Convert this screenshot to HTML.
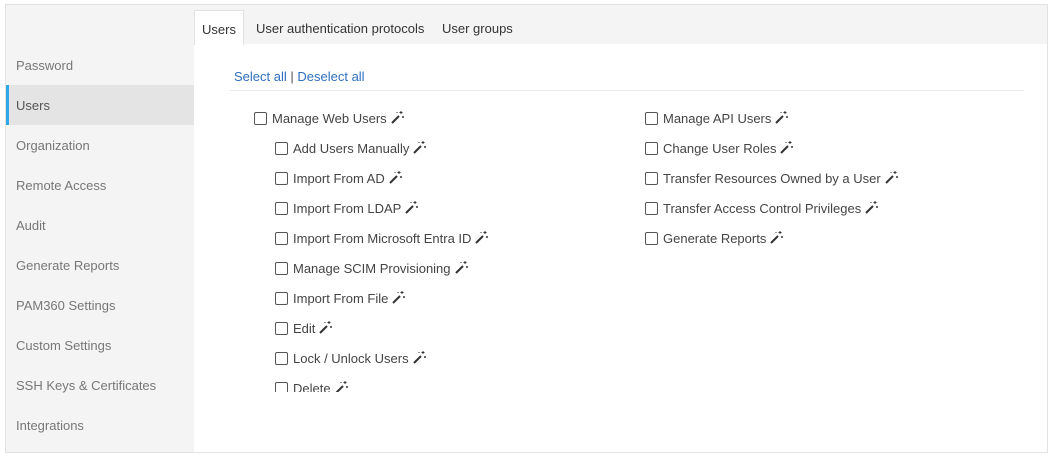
<!DOCTYPE html>
<html><head><style>
body{margin:0;width:1053px;height:457px;background:#fff;font-family:"Liberation Sans",sans-serif;font-size:13px;color:#333;position:relative;overflow:hidden}
.frame{position:absolute;left:5px;top:4px;width:1043px;height:449px;border:1px solid #e2e2e2;background:#f4f4f4;box-sizing:border-box}
.side div{position:absolute;left:6px;width:188px;height:40px;line-height:42px;padding-left:10px;box-sizing:border-box;color:#777}
.side .act{background:#e4e4e4;border-left:3px solid #2ea8e6;padding-left:7px;color:#555}
.content{position:absolute;left:194px;top:44px;width:853px;height:408px;background:#fff}
.tab{position:absolute;top:10px;height:34px;line-height:37px;color:#333}
.tab.a{background:#fff;border:1px solid #e2e2e2;border-bottom:none;left:194px;width:50px;text-align:center;box-sizing:border-box;height:35px}
.links{position:absolute;left:234px;top:69px;color:#2f6fbd}
.links span{color:#555}
.hr{position:absolute;left:229px;top:90px;width:795px;height:1px;background:#ebebeb}
.clip{position:absolute;left:240px;top:100px;width:800px;height:292px;overflow:hidden}
.row{position:absolute;height:18px;line-height:18px;white-space:nowrap;color:#444}
.cb{display:inline-block;width:11px;height:11px;border:1px solid #555;border-radius:2px;vertical-align:-2px;margin-right:5px}
svg{vertical-align:-1px;margin-left:4px}
</style></head><body>
<div class="frame"></div>
<div class="side">
<div style="top:45px">Password</div>
<div class="act" style="top:85px">Users</div>
<div style="top:125px">Organization</div>
<div style="top:165px">Remote Access</div>
<div style="top:205px">Audit</div>
<div style="top:245px">Generate Reports</div>
<div style="top:285px">PAM360 Settings</div>
<div style="top:325px">Custom Settings</div>
<div style="top:365px">SSH Keys &amp; Certificates</div>
<div style="top:405px">Integrations</div>
</div>
<div class="content"></div>
<div class="tab a">Users</div>
<div class="tab" style="left:256px">User authentication protocols</div>
<div class="tab" style="left:442px">User groups</div>
<div class="links">Select all <span>|</span> Deselect all</div>
<div class="hr"></div>
<div class="clip" id="c"></div>
<script>
var w='<svg width="13" height="13" viewBox="0 0 13 13"><path d="M1 12L8 5" stroke="#333" stroke-width="2"/><path d="M10 0v3M8.5 1.5h3M12 5v2M11 6h2M6 1v1" stroke="#333" stroke-width="1"/></svg>';
var L=[[14,"Manage Web Users"],[35,"Add Users Manually"],[35,"Import From AD"],[35,"Import From LDAP"],[35,"Import From Microsoft Entra ID"],[35,"Manage SCIM Provisioning"],[35,"Import From File"],[35,"Edit"],[35,"Lock / Unlock Users"],[35,"Delete"]];
var R=["Manage API Users","Change User Roles","Transfer Resources Owned by a User","Transfer Access Control Privileges","Generate Reports"];
var h='';L.forEach(function(a,i){h+='<div class="row" style="left:'+a[0]+'px;top:'+(10+i*30)+'px"><span class="cb"></span>'+a[1]+w+'</div>'});
R.forEach(function(a,i){h+='<div class="row" style="left:405px;top:'+(10+i*30)+'px"><span class="cb"></span>'+a+w+'</div>'});
document.getElementById('c').innerHTML=h;
</script>
</body></html>
